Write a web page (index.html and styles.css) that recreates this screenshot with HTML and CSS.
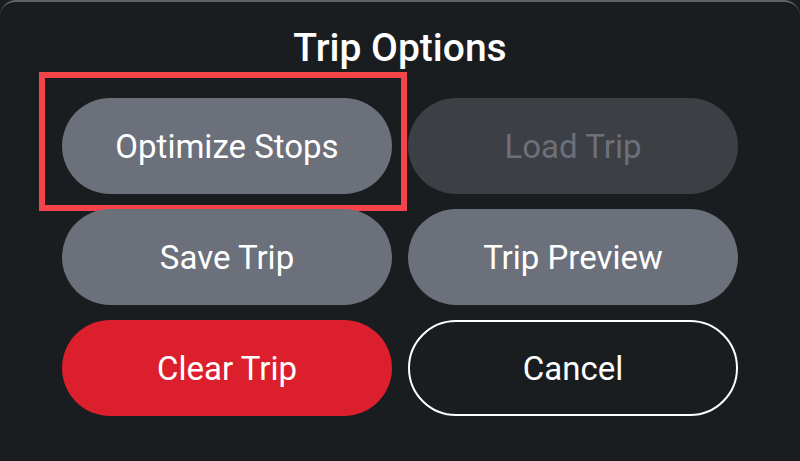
FILE: index.html
```html
<!DOCTYPE html>
<html lang="en">
<head>
    <meta charset="UTF-8">
    <meta name="viewport" content="width=device-width, initial-scale=1.0">
    <title>Trip Options</title>
    <link rel="stylesheet" href="styles.css">
</head>
<body>
    <div class="sheet">
        <h1 class="title">Trip Options</h1>
        <div class="options">
            <button class="opt focused">Optimize Stops</button>
            <button class="opt disabled" disabled>Load Trip</button>
            <button class="opt">Save Trip</button>
            <button class="opt">Trip Preview</button>
            <button class="opt danger">Clear Trip</button>
            <button class="opt outline">Cancel</button>
        </div>
    </div>
</body>
</html>
```

FILE: styles.css
```css
body, html {
    margin: 0;
    padding: 0;
    height: 100%;
    overflow: hidden;
    background: #1a1d20;
    font-family: Roboto, "Liberation Sans", sans-serif;
}
.sheet {
    height: 100%;
    box-sizing: border-box;
    border-top: 2px solid #5f6267;
    border-radius: 16px 16px 0 0;
    background: #1a1d20;
    padding-top: 26px;
}
.title {
    margin: 0 0 30px;
    text-align: center;
    color: #fff;
    font-size: 39px;
    font-weight: 500;
    line-height: 40px;
}
.options {
    display: grid;
    grid-template-columns: 330px 330px;
    grid-auto-rows: 96px;
    column-gap: 16px;
    row-gap: 15px;
    justify-content: center;
}
.opt {
    position: relative;
    border: none;
    border-radius: 48px;
    background: #6c707a;
    color: #fff;
    font-family: inherit;
    font-size: 33px;
    padding: 0;
}
.opt.disabled {
    background: #3c3f44;
    color: #6d6f7a;
}
.opt.danger {
    background: #dc1f2c;
}
.opt.outline {
    background: transparent;
    border: 2px solid #fff;
}
.focused::after {
    content: "";
    position: absolute;
    left: -23px;
    top: -26px;
    right: -15px;
    bottom: -17px;
    border: 6px solid #f4444a;
}
```
